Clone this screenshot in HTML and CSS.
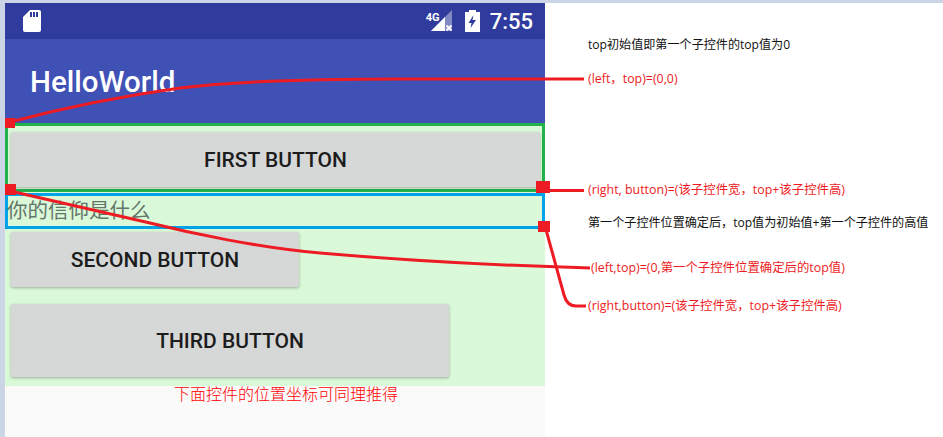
FILE: index.html
```html
<!DOCTYPE html>
<html lang="zh-CN">
<head>
  <meta charset="UTF-8">
  <title>HelloWorld</title>
  <link rel="stylesheet" href="styles.css">
</head>
<body>
  <div class="page">
    <div class="phone">
      <div class="status-bar">
        <svg class="sd-icon" width="18" height="22" viewBox="0 0 18 22">
          <path d="M7 0H16a2 2 0 0 1 2 2V20a2 2 0 0 1-2 2H2a2 2 0 0 1-2-2V7Z" fill="#fff"/>
          <path d="M7 2h2v5H7ZM10 2h2v5h-2ZM13 2h2v5h-2Z" fill="#303c9d"/>
        </svg>
        <div class="status-right">
          <svg class="signal-icon" width="22" height="22" viewBox="0 0 22 22">
            <path d="M21 0V21H0Z" fill="#fff" opacity=".4"/>
            <path d="M14 7V21H0Z" fill="#fff"/>
            <path d="M15.500 15.500l5 5M20.500 15.500l-5 5" stroke="#fff" stroke-width="2"/>
          </svg>
          <span class="net-label">4G</span>
          <svg class="battery-icon" width="15" height="22" viewBox="0 0 15 22">
            <path d="M4 0h7v2h4v20H0V2h4Z" fill="#fff"/>
            <path d="M8.500 5 3.500 13h3l-1 5 5.500-8H7.500Z" fill="#303c9d"/>
          </svg>
          <span class="clock">7:55</span>
        </div>
      </div>
      <div class="app-bar">HelloWorld</div>
      <div class="content">
        <div class="box-green">
          <button class="btn btn-first">FIRST BUTTON</button>
        </div>
        <div class="box-blue">你的信仰是什么</div>
        <button class="btn btn-second">SECOND BUTTON</button>
        <button class="btn btn-third">THIRD BUTTON</button>
      </div>
      <div class="below">下面控件的位置坐标可同理推得</div>
    </div>

    <div class="notes">
      <p class="note">top初始值即第一个子控件的top值为0</p>
      <p class="note red gap-1">(left，top)=(0,0)</p>
      <p class="note red gap-2">(right, button)=(该子控件宽，top+该子控件高)</p>
      <p class="note gap-3">第一个子控件位置确定后，top值为初始值+第一个子控件的高值</p>
      <p class="note red gap-4 indent">(left,top)=(0,第一个子控件位置确定后的top值)</p>
      <p class="note red gap-5">(right,button)=(该子控件宽，top+该子控件高)</p>
    </div>
  </div>

  <!-- red markers drawn over the screenshot -->
  <svg class="markers" width="943" height="437" viewBox="0 0 943 437">
    <g fill="none" stroke="#ed1c24" stroke-width="3">
      <path d="M10 122C70 106 130 95 180 88C230 82 300 79 400 79H584"/>
      <path d="M10 191L150 223C190 233 260 248 320 253C400 260 480 265 590 268"/>
      <path d="M543 190.500H584"/>
      <path d="M545 226L564 295Q567 306 576 306H586"/>
    </g>
    <g fill="#ed1c24">
      <rect x="5" y="118" width="10" height="10"/>
      <rect x="5" y="184" width="11" height="11"/>
      <rect x="536" y="181" width="14" height="12"/>
      <rect x="538" y="221" width="12" height="11"/>
    </g>
  </svg>
</body>
</html>
```

FILE: styles.css
```css
* {
  box-sizing: border-box;
}

body {
  margin: 0;
  height: 437px;
  overflow: hidden;
  background: #cbd5e6;
  font-family: "Roboto", "Noto Sans CJK SC", sans-serif;
}

.page {
  display: flex;
  height: 434px;
  margin: 3px 0 0 5px;
  background: #fff;
}

.phone {
  width: 540px;
  display: flex;
  flex-direction: column;
  background: #fafafa;
}

.status-bar {
  height: 36px;
  flex: none;
  display: flex;
  align-items: center;
  justify-content: space-between;
  padding: 0 12px 0 18px;
  background: #303c9d;
  color: #fff;
}

.status-right {
  position: relative;
  display: flex;
  align-items: center;
}

.signal-icon {
  margin-right: 12px;
}

.net-label {
  position: absolute;
  left: -5px;
  top: 2px;
  font-size: 11px;
  font-weight: 700;
}

.battery-icon {
  margin-right: 10px;
}

.clock {
  font-size: 22px;
  font-weight: 500;
}

.app-bar {
  height: 84px;
  flex: none;
  padding: 24px 0 0 25px;
  background: #3f51b5;
  color: #fff;
  font-size: 29.500px;
  font-weight: 500;
  line-height: 38px;
}

.content {
  height: 263px;
  flex: none;
  background: #daf9d8;
}

.box-green {
  height: 69px;
  padding: 6px 0 0 3px;
  border: 3px solid #22b14c;
}

.box-blue {
  height: 36px;
  margin-top: 1px;
  border: 3px solid #00a2e8;
  color: #64756a;
  font-family: "Noto Sans CJK SC", sans-serif;
  font-size: 20.500px;
  line-height: 27px;
  text-indent: -1px;
}

.btn {
  display: block;
  border: none;
  border-radius: 2px;
  background: #d6d7d7;
  box-shadow: 0 1px 3px rgba(0, 0, 0, 0.3);
  color: #1c1c1c;
  font-family: "Roboto", sans-serif;
  font-size: 21px;
  font-weight: 500;
  padding: 0;
}

.btn-first {
  width: 529px;
  height: 55px;
}

.btn-second {
  width: 288px;
  height: 55px;
  margin: 3px 0 0 6px;
}

.btn-third {
  width: 438px;
  height: 73px;
  margin: 17px 0 0 6px;
}

.below {
  margin-top: -1px;
  padding-left: 169px;
  color: #f00;
  font-family: "Noto Sans CJK SC", sans-serif;
  font-size: 16px;
  font-weight: 300;
  line-height: 16px;
}

.notes {
  flex: 1;
  padding: 34px 0 0 43px;
}

.note {
  margin: 0;
  color: #111;
  font-family: "Open Sans", "Noto Sans CJK SC", sans-serif;
  font-size: 12.100px;
  line-height: 16px;
  white-space: nowrap;
}

.red {
  color: #ed1c24;
  font-size: 12.400px;
}

.indent {
  padding-left: 3px;
}

.gap-1 { margin-top: 18px; }
.gap-2 { margin-top: 95px; }
.gap-3 { margin-top: 17px; }
.gap-4 { margin-top: 29px; }
.gap-5 { margin-top: 22px; }

.markers {
  position: absolute;
  left: 0;
  top: 0;
}
```
